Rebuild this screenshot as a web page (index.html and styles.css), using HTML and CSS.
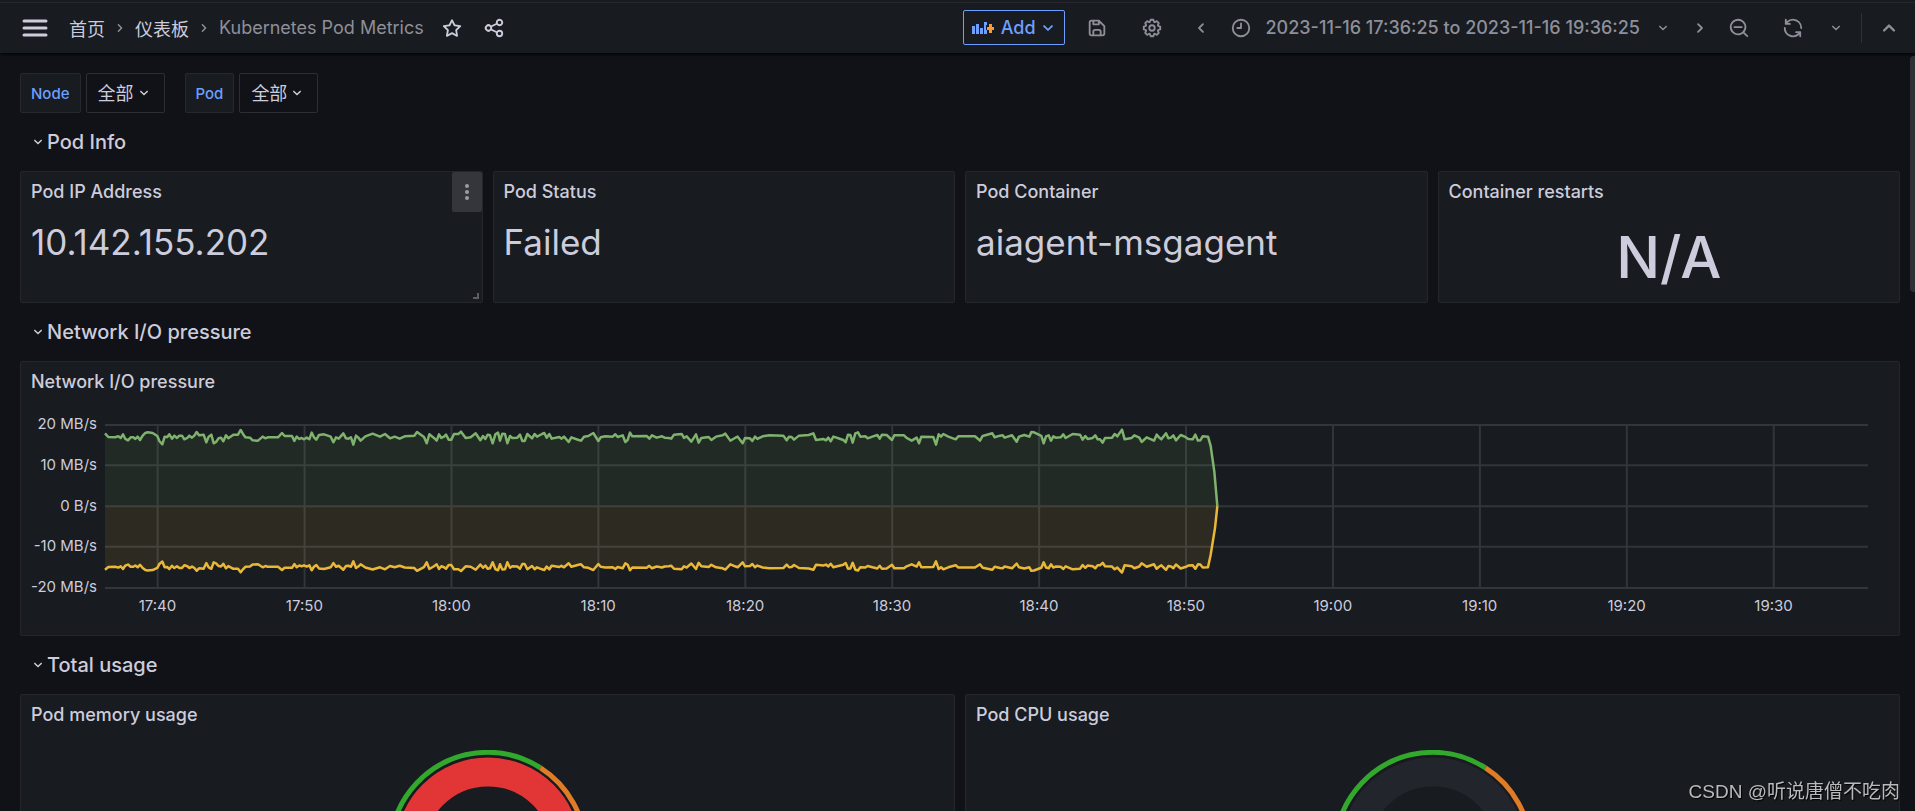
FILE: index.html
```html
<!DOCTYPE html>
<html lang="zh-CN">
<head>
<meta charset="utf-8">
<title>Kubernetes Pod Metrics</title>
<link rel="stylesheet" href="styles.css">
</head>
<body>
<svg class="defs" aria-hidden="true">
  <symbol id="angle-down" viewBox="0 0 24 24"><path d="M17,9.17a1,1,0,0,0-1.41,0L12,12.71,8.46,9.17a1,1,0,0,0-1.41,0,1,1,0,0,0,0,1.42l4.24,4.24a1,1,0,0,0,1.42,0L17,10.59A1,1,0,0,0,17,9.17Z"/></symbol>
  <symbol id="angle-up" viewBox="0 0 24 24"><path d="M17,13.41,12.71,9.17a1,1,0,0,0-1.42,0L7.05,13.41a1,1,0,0,0,0,1.42,1,1,0,0,0,1.41,0L12,11.29l3.54,3.54a1,1,0,0,0,1.41,0A1,1,0,0,0,17,13.41Z"/></symbol>
  <symbol id="angle-right" viewBox="0 0 24 24"><path d="M14.83,11.29,10.59,7.05a1,1,0,0,0-1.42,0,1,1,0,0,0,0,1.41L12.71,12,9.17,15.54a1,1,0,0,0,0,1.41,1,1,0,0,0,.71.29,1,1,0,0,0,.71-.29l4.24-4.24A1,1,0,0,0,14.83,11.29Z"/></symbol>
  <symbol id="angle-left" viewBox="0 0 24 24"><path d="M11.29,12l3.54-3.54a1,1,0,0,0,0-1.41,1,1,0,0,0-1.42,0L9.17,11.29a1,1,0,0,0,0,1.42L13.41,17a1,1,0,0,0,.71.29,1,1,0,0,0,.71-.29,1,1,0,0,0,0-1.41Z"/></symbol>
</svg>

<header class="topbar">
  <button class="icon-btn menu-btn" aria-label="Menu"><svg class="menu-icon" viewBox="0 0 26 18"><path d="M2 2h22M2 9h22M2 16h22"/></svg></button>
  <nav class="crumbs" aria-label="Breadcrumbs">
    <a href="#">首页</a>
    <svg class="icon icon-s"><use href="#angle-right"/></svg>
    <a href="#">仪表板</a>
    <svg class="icon icon-s"><use href="#angle-right"/></svg>
    <span class="current">Kubernetes Pod Metrics</span>
  </nav>
  <button class="icon-btn bright star-btn" aria-label="Star"><svg class="icon" viewBox="0 0 24 24"><path d="M22,9.67A1,1,0,0,0,21.14,9l-5.69-.83L12.9,3a1,1,0,0,0-1.8,0L8.55,8.16,2.86,9a1,1,0,0,0-.81.68,1,1,0,0,0,.25,1l4.13,4-1,5.68A1,1,0,0,0,6.9,21.44L12,18.77l5.1,2.67a.93.93,0,0,0,.46.12,1,1,0,0,0,.59-.19,1,1,0,0,0,.4-1l-1-5.68,4.13-4A1,1,0,0,0,22,9.67Zm-6.15,4a1,1,0,0,0-.29.88l.72,4.2-3.76-2a1.06,1.06,0,0,0-.94,0l-3.76,2,.72-4.2a1,1,0,0,0-.29-.88l-3-3,4.21-.61a1,1,0,0,0,.76-.55L12,5.7l1.88,3.82a1,1,0,0,0,.76.55l4.21.61Z"/></svg></button>
  <button class="icon-btn bright" aria-label="Share"><svg class="icon" viewBox="0 0 24 24"><path d="M18,14a4,4,0,0,0-3.08,1.48l-5.1-2.35a3.64,3.64,0,0,0,0-2.26l5.1-2.35A4,4,0,1,0,14,6a4.17,4.17,0,0,0,.07.71L8.79,9.14a4,4,0,1,0,0,5.72l5.28,2.43A4.17,4.17,0,0,0,14,18a4,4,0,1,0,4-4ZM18,4a2,2,0,1,1-2,2A2,2,0,0,1,18,4ZM6,14a2,2,0,1,1,2-2A2,2,0,0,1,6,14Zm12,6a2,2,0,1,1,2-2A2,2,0,0,1,18,20Z"/></svg></button>

  <div class="tools">
    <button class="add-btn">
      <svg class="add-icon" viewBox="0 0 22 14"><path fill="currentColor" d="M0 5h3v8H0zM4 3h3v10H4zM8 7h3v6H8zM12 1h3v3h-1v5h1v4h-3z"/><path fill="#ff9830" d="M17 3h3v3h2v3h-2v3h-3V9h-2V6h2z"/></svg>
      <span>Add</span>
      <svg class="icon"><use href="#angle-down"/></svg>
    </button>
    <button class="icon-btn save-btn" aria-label="Save"><svg class="icon" viewBox="0 0 24 24"><path d="M20.71,9.29l-6-6a1,1,0,0,0-.32-.21A1.09,1.09,0,0,0,14,3H6A3,3,0,0,0,3,6V18a3,3,0,0,0,3,3H18a3,3,0,0,0,3-3V10A1,1,0,0,0,20.71,9.29ZM9,5h4V7H9Zm6,14H9V16a1,1,0,0,1,1-1h4a1,1,0,0,1,1,1Zm4-1a1,1,0,0,1-1,1H17V16a3,3,0,0,0-3-3H10a3,3,0,0,0-3,3v3H6a1,1,0,0,1-1-1V6A1,1,0,0,1,6,5H7V8A1,1,0,0,0,8,9h6a1,1,0,0,0,1-1V6.41l4,4Z"/></svg></button>
    <button class="icon-btn cog-btn" aria-label="Settings"><svg class="icon" viewBox="0 0 24 24"><path d="M21.32,9.55l-1.89-.63.89-1.78A1,1,0,0,0,20.13,6L18,3.87a1,1,0,0,0-1.15-.19l-1.78.89-.63-1.89A1,1,0,0,0,13.5,2h-3a1,1,0,0,0-.95.68L8.92,4.57,7.14,3.68A1,1,0,0,0,6,3.87L3.87,6a1,1,0,0,0-.19,1.15l.89,1.78-1.89.63A1,1,0,0,0,2,10.5v3a1,1,0,0,0,.68.95l1.89.63-.89,1.78A1,1,0,0,0,3.87,18L6,20.13a1,1,0,0,0,1.15.19l1.78-.89.63,1.89a1,1,0,0,0,.95.68h3a1,1,0,0,0,.95-.68l.63-1.89,1.78.89A1,1,0,0,0,18,20.13L20.13,18a1,1,0,0,0,.19-1.15l-.89-1.78,1.89-.63A1,1,0,0,0,22,13.5v-3A1,1,0,0,0,21.32,9.55ZM20,12.78l-1.2.4A2,2,0,0,0,17.64,16l.57,1.14-1.1,1.1L16,17.64a2,2,0,0,0-2.79,1.16l-.4,1.2H11.22l-.4-1.2A2,2,0,0,0,8,17.64l-1.14.57-1.1-1.1L6.36,16A2,2,0,0,0,5.2,13.18L4,12.78V11.22l1.2-.4A2,2,0,0,0,6.36,8L5.79,6.89l1.1-1.1L8,6.36A2,2,0,0,0,10.82,5.2l.4-1.2h1.56l.4,1.2A2,2,0,0,0,16,6.36l1.14-.57,1.1,1.1L17.64,8a2,2,0,0,0,1.16,2.79l1.2.4ZM12,8a4,4,0,1,0,4,4A4,4,0,0,0,12,8Zm0,6a2,2,0,1,1,2-2A2,2,0,0,1,12,14Z"/></svg></button>
    <button class="icon-btn step-btn" aria-label="Move time range back"><svg class="icon"><use href="#angle-left"/></svg></button>
    <button class="range-btn">
      <svg class="icon" viewBox="0 0 24 24"><path d="M12,2A10,10,0,1,0,22,12,10,10,0,0,0,12,2Zm0,18a8,8,0,1,1,8-8A8,8,0,0,1,12,20ZM12,6a1,1,0,0,0-1,1v4H8a1,1,0,0,0,0,2h4a1,1,0,0,0,1-1V7A1,1,0,0,0,12,6Z"/></svg>
      <span>2023-11-16 17:36:25 to 2023-11-16 19:36:25</span>
      <svg class="icon icon-s"><use href="#angle-down"/></svg>
    </button>
    <button class="icon-btn step-btn" aria-label="Move time range forward"><svg class="icon"><use href="#angle-right"/></svg></button>
    <button class="icon-btn zoom-btn" aria-label="Zoom out"><svg class="icon" viewBox="0 0 24 24"><path d="M21.71,20.29,18,16.61A9,9,0,1,0,16.61,18l3.68,3.68a1,1,0,0,0,1.42,0A1,1,0,0,0,21.71,20.29ZM11,18a7,7,0,1,1,7-7A7,7,0,0,1,11,18Zm4-8H7a1,1,0,0,0,0,2h8a1,1,0,0,0,0-2Z"/></svg></button>
    <button class="icon-btn sync-btn" aria-label="Refresh"><svg class="icon" viewBox="0 0 24 24"><path d="M19.91,15.51H15.38a1,1,0,0,0,0,2h2.4A8,8,0,0,1,4,12a1,1,0,0,0-2,0,10,10,0,0,0,16.88,7.23V21a1,1,0,0,0,2,0V16.5A1,1,0,0,0,19.91,15.51ZM12,2A10,10,0,0,0,5.12,4.77V3a1,1,0,0,0-2,0V7.5a1,1,0,0,0,1,1h4.5a1,1,0,0,0,0-2H6.22A8,8,0,0,1,20,12a1,1,0,0,0,2,0A10,10,0,0,0,12,2Z"/></svg></button>
    <button class="icon-btn interval-btn" aria-label="Refresh interval"><svg class="icon icon-s"><use href="#angle-down"/></svg></button>
    <span class="divider"></span>
    <button class="icon-btn up-btn" aria-label="Hide toolbar"><svg class="icon icon-l"><use href="#angle-up"/></svg></button>
  </div>
</header>

<main class="page">
  <div class="filters">
    <div class="filter">
      <label for="var-node">Node</label>
      <div class="picker"><select id="var-node"><option>全部</option></select><svg class="icon icon-s"><use href="#angle-down"/></svg></div>
    </div>
    <div class="filter">
      <label for="var-pod">Pod</label>
      <div class="picker"><select id="var-pod"><option>全部</option></select><svg class="icon icon-s"><use href="#angle-down"/></svg></div>
    </div>
  </div>

  <button class="row-title"><svg class="icon icon-s"><use href="#angle-down"/></svg>Pod Info</button>

  <div class="grid four">
    <section class="panel stat">
      <h2>Pod IP Address</h2>
      <button class="panel-menu" aria-label="Panel menu"><svg viewBox="0 0 4 16"><circle cx="2" cy="2" r="2"/><circle cx="2" cy="8" r="2"/><circle cx="2" cy="14" r="2"/></svg></button>
      <p class="value">10.142.155.202</p>
      <span class="resize"></span>
    </section>
    <section class="panel stat"><h2>Pod Status</h2><p class="value">Failed</p></section>
    <section class="panel stat"><h2>Pod Container</h2><p class="value">aiagent-msgagent</p></section>
    <section class="panel stat"><h2>Container restarts</h2><p class="value big">N/A</p></section>
  </div>

  <button class="row-title"><svg class="icon icon-s"><use href="#angle-down"/></svg>Network I/O pressure</button>

  <section class="panel">
    <h2>Network I/O pressure</h2>
    <div class="chart">
      <div class="y-axis"><span>20 MB/s</span><span>10 MB/s</span><span>0 B/s</span><span>-10 MB/s</span><span>-20 MB/s</span></div>
      <svg class="plot" id="plot" viewBox="0 0 5289 490" preserveAspectRatio="none" role="img" aria-label="Network traffic in and out"></svg>
      <div class="x-axis"><span>17:40</span><span>17:50</span><span>18:00</span><span>18:10</span><span>18:20</span><span>18:30</span><span>18:40</span><span>18:50</span><span>19:00</span><span>19:10</span><span>19:20</span><span>19:30</span></div>
    </div>
  </section>

  <button class="row-title"><svg class="icon icon-s"><use href="#angle-down"/></svg>Total usage</button>

  <div class="grid two">
    <section class="panel">
      <h2>Pod memory usage</h2>
      <svg class="gauge" viewBox="-100 -100 200 200">
        <circle r="78" fill="none" stroke="#e23636" stroke-width="29"/>
        <path class="ok" d="M-79,57.4A97.5,97.5,0,0,1,52.5,-82.1"/>
        <path class="warn" d="M52.5,-82.1A97.5,97.5,0,0,1,97.5,0"/>
      </svg>
    </section>
    <section class="panel">
      <h2>Pod CPU usage</h2>
      <svg class="gauge" viewBox="-100 -100 200 200">
        <circle r="78" fill="none" stroke="#22252b" stroke-width="29"/>
        <path class="ok" d="M-79,57.4A97.5,97.5,0,0,1,52.5,-82.1"/>
        <path class="warn" d="M52.5,-82.1A97.5,97.5,0,0,1,97.5,0"/>
      </svg>
    </section>
  </div>
</main>
<div class="scroll-thumb"></div>
<div class="watermark">CSDN @听说唐僧不吃肉</div>
<script src="chart.js"></script>
</body>
</html>
```
FILE: styles.css
```css
* { box-sizing: border-box; }
body {
  margin: 0;
  height: 100vh;
  overflow: hidden;
  background: #111217;
  color: #ccccdc;
  font-family: Inter, "Noto Sans CJK SC", sans-serif;
  font-size: 18px;
}
button { border: 0; padding: 0; margin: 0; background: none; color: inherit; font: inherit; }
h2, p { margin: 0; }
.defs { display: none; }

.icon { width: 22px; height: 22px; fill: currentColor; flex: none; }
.icon-s { width: 18px; height: 18px; }
.icon-l { width: 28px; height: 28px; }

/* Top bar */
.topbar {
  position: relative;
  display: flex;
  align-items: center;
  height: 53px;
  padding: 2px 8px 0 20px;
  background: #181b1f;
  box-shadow: inset 0 2px 0 #181b1f, inset 0 3px 0 #26282d, 0 1px 4px #000;
}
.icon-btn { display: flex; align-items: center; justify-content: center; height: 40px; color: #8e8f9a; }
.bright { color: #ccccdc; width: 42px; }
.menu-btn { width: 30px; }
.menu-icon { width: 26px; height: 18px; stroke: #ccccdc; stroke-width: 3; stroke-linecap: round; fill: none; }
.crumbs { display: flex; align-items: center; margin-left: 19px; gap: 6px; white-space: nowrap; }
.crumbs a { color: #ccccdc; text-decoration: none; }
.crumbs .icon { color: #8e8f9a; }
.crumbs .current { color: #8e8f9a; }
.star-btn { margin-left: 7px; }
.tools { display: flex; align-items: center; margin-left: auto; white-space: nowrap; }
.add-btn {
  display: flex;
  align-items: center;
  gap: 1px;
  height: 35px;
  padding: 0 5px 0 8px;
  margin-right: 8px;
  border: 1px solid #6e9fff;
  border-radius: 2px;
  color: #6e9fff;
  font-weight: 500;
}
.add-icon { width: 22px; height: 14px; margin-right: 6px; }
.save-btn { width: 48px; }
.cog-btn { width: 62px; margin-right: 8px; }
.step-btn { width: 20px; }
.range-btn {
  display: flex;
  align-items: center;
  gap: 14px;
  padding: 0 18px 0 19px;
  color: #8e8f9a;
  font-weight: 500;
}
.zoom-btn { width: 58px; }
.sync-btn { width: 50px; }
.interval-btn { width: 36px; }
.divider { width: 1px; height: 30px; margin: 0 8px 0 7px; background: #303238; }
.up-btn { width: 37px; }

/* Page */
.page { display: flex; flex-direction: column; gap: 10px; padding: 20px 15px 0 20px; }
.filters { display: flex; gap: 20px; }
.filter { display: flex; gap: 5px; }
.filter label, .picker {
  display: flex;
  align-items: center;
  height: 40px;
  border: 1px solid #26282e;
  border-radius: 2px;
}
.filter label { padding: 0 10px; background: #181b1f; color: #6e9fff; font-size: 15px; font-weight: 500; }
.picker { gap: 1px; padding: 0 11px; border-color: #2d2e34; }
.picker select {
  appearance: none;
  border: 0;
  padding: 0;
  background: #111217;
  color: inherit;
  font: inherit;
}
.row-title {
  display: flex;
  align-items: center;
  height: 38px;
  padding: 0 0 1px 9px;
  font-size: 20px;
  font-weight: 500;
}
.grid { display: grid; gap: 10px; }
.four { grid-template-columns: repeat(4, 1fr); }
.two { grid-template-columns: repeat(2, 1fr); }
.panel {
  position: relative;
  background: #181b1f;
  border: 1px solid #24262b;
  border-radius: 2px;
}
.panel h2 { padding: 0 10px; font-size: 18px; font-weight: 500; line-height: 40px; }
.stat { height: 132px; }
.value { padding: 0 10px; font-size: 35px; line-height: 60px; }
.value.big { font-size: 58px; font-weight: 500; line-height: 90px; text-align: center; }
.panel-menu {
  position: absolute;
  top: 0;
  right: 0;
  display: flex;
  align-items: center;
  justify-content: center;
  width: 30px;
  height: 40px;
  border-radius: 2px;
  background: #34363b;
  color: #9a9ba5;
}
.panel-menu svg { width: 4px; height: 16px; fill: currentColor; }
.resize {
  position: absolute;
  right: 3px;
  bottom: 3px;
  width: 6px;
  height: 6px;
  border: solid #5c5e63;
  border-width: 0 2px 2px 0;
}

/* Time series */
.chart {
  display: grid;
  grid-template: 163px 30px / 76px 1fr;
  column-gap: 8px;
  padding: 23px 31px 17px 0;
}
.y-axis {
  display: flex;
  flex-direction: column;
  justify-content: space-between;
  margin: -11px 0 -9px;
  font-size: 15px;
  line-height: 20px;
  text-align: right;
}
.plot { width: 100%; height: 100%; overflow: visible; }
.plot path { fill: none; vector-effect: non-scaling-stroke; }
.plot .lines { stroke: rgba(240, 250, 255, 0.12); stroke-width: 2; }
.plot .in { stroke: #7eb26d; stroke-width: 2.5; stroke-linejoin: round; }
.plot .out { stroke: #eab839; stroke-width: 2.5; stroke-linejoin: round; }
.plot .in-fill { fill: rgba(126, 178, 109, 0.1); }
.plot .out-fill { fill: rgba(234, 184, 57, 0.1); }
.x-axis {
  grid-column: 2;
  display: grid;
  grid-template-columns: repeat(12, 1fr);
  margin: 8px 21px 0 -21px;
  font-size: 15px;
  line-height: 20px;
  text-align: center;
}

.gauge { display: block; width: 200px; height: 200px; margin: 15px auto 0; }
.gauge .ok { fill: none; stroke: #32a82d; stroke-width: 5; }
.gauge .warn { fill: none; stroke: #e07b26; stroke-width: 5; }

.scroll-thumb {
  position: fixed;
  top: 56px;
  right: 0;
  width: 5px;
  height: 236px;
  border-radius: 4px 0 0 4px;
  background: #2f3036;
}
.watermark {
  position: fixed;
  right: 15px;
  bottom: 5px;
  color: #b9babc;
  font: 19px/28px "Liberation Sans", "Noto Sans CJK SC", sans-serif;
  text-shadow: 1px 1px 1px #000;
}
```
FILE: chart.js
```js
// Traffic samples: each segment has an x offset, a baseline and "x,y" knots.
const segments = [
  [-315, 261, "315,250 325,261 345,262 355,259 362,264 369,253 376,267 384,271 392,262 400,262 406,267 413,260 420,270 428,257 436,249 443,247 458,249 472,258 478,273 487,283 494,260 502,261 508,253 516,266 523,257 531,264 538,257 546,257 553,268 562,264 568,257 576,263 583,257 590,246 597,256 611,254 619,277 626,260 634,254 641,280 648,276 656,265 663,263 670,274 678,256 685,265 700,254 714,254 722,240 729,252 736,262 750,263 758,271 774,272 788,260 796,265 803,262 834,262 846,249 854,258 876,258 883,273 890,260 898,267 905,264 912,268 920,263 928,268 935,248 942,262 949,269 957,255 972,253 992,260 1000,277 1008,262 1016,266 1030,250 1038,265 1045,266 1053,262 1060,284 1068,257 1075,263 1082,272 1096,259 1118,251 1140,260 1155,252 1170,265 1184,260 1199,266 1214,259 1243,257 1251,246 1272,261 1280,280 1288,253 1302,264 1310,272 1317,253 1324,264 1332,260 1338,254 1346,269 1354,269 1362,252 1375,252 1383,245 1397,264 1412,262 1427,250 1441,271 1449,258 1456,267 1463,254 1470,256 1478,280 1486,253 1494,248"],
  [1185, 81, "0,92 7,71 15,72 22,100 30,78 37,84 52,83 60,74 67,93 74,93 82,72 96,85 104,72 111,80 126,72 133,69 140,83 148,72 155,86 178,81 184,86 192,80 206,96 214,82 236,90 243,92 252,80 265,78 280,69 295,93 302,82 316,79 338,80 346,73 353,81 368,76 376,96 383,90 390,68 397,79 440,78 448,86 456,76 470,83 486,79 494,83 506,84 514,86 522,74 545,72 552,84 560,79 574,95 588,73 596,98 604,84 626,81 634,90 648,80 668,76 676,71 691,92 705,84 713,80 728,100 735,84 750,85 757,93 765,80 772,87 788,79 808,76 850,77 860,91 867,80 875,81 882,89 897,77 926,75 940,70 948,90 970,87 978,91 985,83 992,94 1000,80 1015,85 1030,90 1037,97 1044,74 1051,75 1058,98 1066,70 1074,67 1081,80 1096,79 1103,85 1117,80 1132,75 1139,86 1146,74 1160,75 1176,90 1183,76 1212,76 1220,84 1235,92 1250,83 1257,100 1264,80 1300,81 1308,104 1316,73 1323,80 1330,72 1345,80 1367,88 1375,79 1425,79 1440,92 1448,78 1477,70 1484,82"],
  [2685, 111, "0,107 8,106 14,113 36,106 50,125 57,110 73,105 88,110 94,96 102,97 124,108 131,130 138,109 146,106 153,122 160,109 167,113 182,112 190,103 197,114 218,102 240,104 248,119 256,108 263,117 278,114 286,106 293,118 300,118 308,128 315,114 336,113 344,102 352,109 366,89 374,118 395,114 403,106 418,113 425,126 440,112 462,122 470,104 477,112 484,118 498,100 505,115 513,113 520,106 528,121 542,105 556,111 565,117 578,118 586,104 594,122 601,121 608,109 624,110"]
];
const samples = segments.flatMap(([dx, base, list]) =>
  list.split(" ").map(p => {
    const [x, y] = p.split(",").map(Number);
    return [x + dx, y - base];
  }));

const zero = 244;
const traffic = samples.map(([x, d]) => [x, 36 + d]).concat([[3317, 63], [3328, 140], [3337, zero]]);
const egress = samples.map(([x, d]) => [x, 427 - d * 0.75]).concat([[3317, 390], [3330, 310], [3337, zero]]);
const path = points => "M" + points.map(p => p.join(",")).join("L");

// Grid: five value lines and a time line every ten minutes.
let lines = [0, 121, zero, 366, 490].map(y => `M0,${y}H5289`).join("");
for (let i = 0; i < 12; i++) {
  lines += `M${(215 / 60 + i * 10) * 5289 / 120},0V490`;
}

document.getElementById("plot").innerHTML =
  `<path class="lines" d="${lines}"/>` +
  `<path class="in-fill" d="${path(traffic)}L0,${zero}Z"/>` +
  `<path class="out-fill" d="${path(egress)}L0,${zero}Z"/>` +
  `<path class="in" d="${path(traffic)}"/>` +
  `<path class="out" d="${path(egress)}"/>`;
```
